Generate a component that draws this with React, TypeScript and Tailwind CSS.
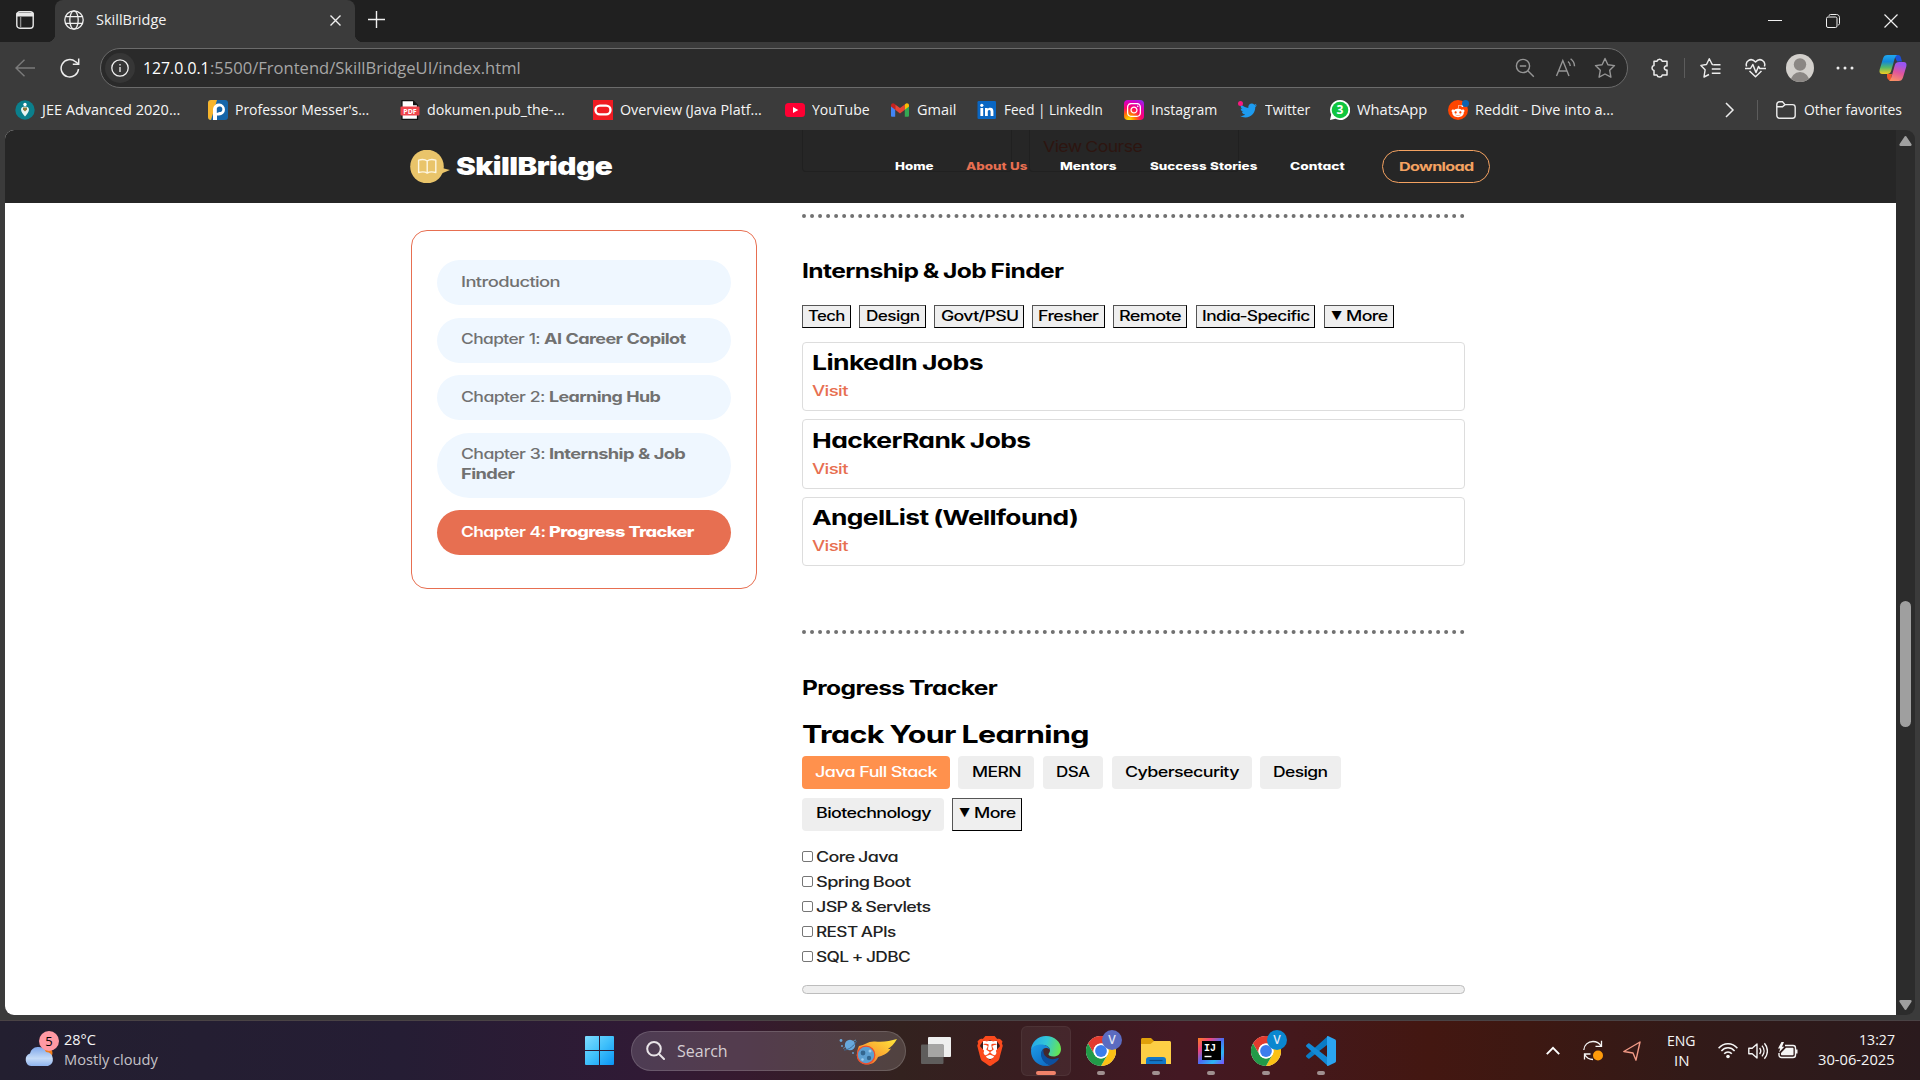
import React, { useLayoutEffect, useRef, useState } from 'react';
import { SiBrave } from 'react-icons/si';
import { FaTwitter, FaRedditAlien, FaInstagram } from 'react-icons/fa';

interface FitProps {
  w: number;
  className?: string;
  children: React.ReactNode;
}

// Single line of text stretched to a fixed width, keeps labels aligned with any fallback font
const Fit: React.FC<FitProps> = ({ w, className = '', children }) => {
  const ref = useRef<HTMLSpanElement>(null);
  const [scale, setScale] = useState(1);

  useLayoutEffect(() => {
    if (ref.current && ref.current.offsetWidth > 0) {
      setScale(w / ref.current.offsetWidth);
    }
  }, [w]);

  return (
    <span className={`block shrink-0 text-left ${className}`} style={{ width: w }}>
      <span ref={ref} className="inline-block origin-left whitespace-nowrap" style={{ transform: `scaleX(${scale})` }}>
        {children}
      </span>
    </span>
  );
};

const TabStrip = () => (
  <div className="flex h-[42px] shrink-0 bg-[#202020] text-[#f3f3f3]">
    <svg className="ml-4 mt-[11px] h-[18px] w-[18px] shrink-0" viewBox="0 0 18 18" fill="none" stroke="#e8e8e8" strokeWidth="1.4">
      <rect x="0.8" y="0.8" width="16.4" height="16.4" rx="3" />
      <path d="M1 2.5h16v2.2H1z" fill="#e8e8e8" />
      <path d="M4.6 5v12" stroke="#8a8a8a" />
    </svg>
    <div className="relative ml-[21px] flex h-[42px] w-[300px] rounded-t-lg bg-[#3b3b3b]">
      <span className="absolute -left-2 bottom-0 h-2 w-2 bg-[radial-gradient(circle_at_0_0,#202020_8px,#3b3b3b_8.5px)]" />
      <span className="absolute -right-2 bottom-0 h-2 w-2 bg-[radial-gradient(circle_at_100%_0,#202020_8px,#3b3b3b_8.5px)]" />
      <svg className="ml-[9px] mt-[10px] h-5 w-5" viewBox="0 0 20 20" fill="none" stroke="#f0f0f0" strokeWidth="1.3">
        <circle cx="10" cy="10" r="9.2" />
        <ellipse cx="10" cy="10" rx="4.2" ry="9.2" />
        <path d="M1.6 6.7h16.8M1.6 13.3h16.8" />
      </svg>
      <Fit w={70} className="ml-3 mt-[9px] text-[14.5px] leading-[21px]">SkillBridge</Fit>
      <svg className="ml-[164px] mt-[15px] h-[11px] w-[11px]" viewBox="0 0 11 11" stroke="#f0f0f0" strokeWidth="1.4">
        <path d="M0.5 0.5l10 10M10.5 0.5l-10 10" />
      </svg>
    </div>
    <svg className="ml-[13px] mt-[11px] h-[17px] w-[17px]" viewBox="0 0 17 17" stroke="#f0f0f0" strokeWidth="1.4">
      <path d="M8.5 0v17M0 8.5h17" />
    </svg>
    <div className="ml-auto mr-[22px] flex h-[42px] items-center">
      <svg className="h-[14px] w-[14px]" viewBox="0 0 14 14" stroke="#f0f0f0"><path d="M0 6.5h14" /></svg>
      <svg className="ml-[44px] h-[14px] w-[14px]" viewBox="0 0 14 14" fill="none" stroke="#f0f0f0">
        <rect x="0.5" y="3" width="10.5" height="10.5" rx="1.5" />
        <path d="M3 1.8C3 1 3.6.5 4.4.5h6c1.8 0 3.1 1.3 3.1 3.1v6c0 .8-.5 1.4-1.3 1.4" />
      </svg>
      <svg className="ml-[44px] h-[14px] w-[14px]" viewBox="0 0 14 14" stroke="#f0f0f0" strokeWidth="1.2">
        <path d="M0.5 0.5l13 13M13.5 0.5l-13 13" />
      </svg>
    </div>
  </div>
);

const AddressRow = () => (
  <div className="flex h-10 items-center">
    <svg className="ml-[15px] h-5 w-5" viewBox="0 0 20 20" fill="none" stroke="#7b7b7b" strokeWidth="1.4">
      <path d="M20 10H1M9.5 1.8L1 10l8.500 8.200" />
    </svg>
    <svg className="ml-[25px] h-[22px] w-5" viewBox="0 0 20 22" fill="none" stroke="#ececec" strokeWidth="1.5">
      <path d="M18.500 12a8.700 8.700 0 1 1-3-7.300L18.500 7" />
      <path d="M18.700 1.500V7.300H12.800" />
    </svg>
    <div className="ml-5 flex h-10 w-[1528px] items-center rounded-full border border-[#6b6b6b] bg-[#2a2a2a] pr-[11px]">
      <span className="ml-1 flex h-[30px] w-[30px] items-center justify-center rounded-full bg-[#363636]">
        <svg className="h-[18px] w-[18px]" viewBox="0 0 18 18" fill="none" stroke="#f0f0f0" strokeWidth="1.3">
          <circle cx="9" cy="9" r="8.200" />
          <path d="M9 8v5M9 5v1.500" />
        </svg>
      </span>
      <Fit w={67} className="ml-2 pb-px text-[16.500px] leading-6 text-white">127.0.0.1</Fit>
      <Fit w={311} className="pb-px text-[16.500px] leading-6 text-[#a6a6a6]">:5500/Frontend/SkillBridgeUI/index.html</Fit>
      <svg className="ml-auto h-5 w-5" viewBox="0 0 20 20" fill="none" stroke="#969696" strokeWidth="1.400">
        <circle cx="8" cy="8" r="6.600" />
        <path d="M4.800 8h6.400M12.800 12.800l6 6" />
      </svg>
      <svg className="ml-5 h-[22px] w-[22px]" viewBox="0 0 22 22" fill="none" stroke="#969696" strokeWidth="1.400">
        <path d="M1.500 19L7.800 3.500 14 19M3.600 14h8.400" />
        <path d="M13 4.500c1.500 1.200 2.300 2.600 2.300 4.500M15.600 1.800c2.500 1.900 3.900 4.200 3.900 7.500" />
      </svg>
      <svg className="ml-[17px] h-[22px] w-[22px]" viewBox="0 0 22 22" fill="none" stroke="#969696" strokeWidth="1.400" strokeLinejoin="round">
        <path d="M11 1.500l2.900 6.200 6.600.9-4.800 4.700 1.200 6.900L11 17l-5.900 3.200 1.200-6.900L1.500 8.600l6.600-.9z" />
      </svg>
    </div>
    <svg className="ml-[22px] h-5 w-5" viewBox="0 0 20 20" fill="none" stroke="#ececec" strokeWidth="1.500" strokeLinejoin="round">
      <path d="M4 3.300h2.900a2.800 2.800 0 0 1 5.400 0h4.700v4.600c-1.500-.2-2.700.6-2.700 2s1.200 2.300 2.700 2.100v5h-4.700a2.800 2.800 0 0 1-5.400 0H4v-4.500a2.500 2.500 0 0 1 0-4.900z" />
    </svg>
    <span className="ml-[14px] h-5 w-px bg-[#5c5c5c]" />
    <svg className="ml-[15px] h-[22px] w-[21px]" viewBox="0 0 21 22" fill="none" stroke="#ececec" strokeWidth="1.400" strokeLinejoin="round">
      <path d="M13 7.500h-.8L9.300 1.700 6.500 7.500.9 8.400l4.200 4.400L4 20l5-2.500" />
      <path d="M13.200 7.800H20.500M11.800 12H20.500M11.800 16.200H20.500" />
    </svg>
    <svg className="ml-6 h-5 w-[21px]" viewBox="0 0 21 20" fill="none" stroke="#ececec" strokeWidth="1.500" strokeLinejoin="round">
      <path d="M1.600 8.500C-.2 3 6-1 10.500 4 15-1 21.200 3 19.400 8.500M4.500 13l6 5.800 6-5.800" />
      <path d="M0 10.500h5.500l2.300-4 3.200 8 2.500-6 1.300 2H21" />
    </svg>
    <svg className="ml-5 h-7 w-7" viewBox="0 0 28 28">
      <clipPath id="avatar"><circle cx="14" cy="14" r="14" /></clipPath>
      <g clipPath="url(#avatar)">
        <path d="M0 0h28v28H0z" fill="#d3d0cc" />
        <circle cx="14" cy="10.500" r="6.200" fill="#8b8784" />
        <path d="M4.500 28a9.500 10 0 0 1 19 0z" fill="#8b8784" />
      </g>
    </svg>
    <svg className="ml-[22px] h-1 w-[18px]" viewBox="0 0 18 4" fill="#ececec">
      <circle cx="2" cy="2" r="1.500" /><circle cx="9" cy="2" r="1.500" /><circle cx="16" cy="2" r="1.500" />
    </svg>
    <svg className="ml-[25px] h-7 w-7" viewBox="0 0 28 28">
      <defs>
        <linearGradient id="cpA" x1="0" y1="0" x2="0" y2="1">
          <stop offset="0" stopColor="#1fa8f0" /><stop offset="0.350" stopColor="#1488d8" /><stop offset="0.650" stopColor="#53b86a" /><stop offset="1" stopColor="#f3cd20" />
        </linearGradient>
        <linearGradient id="cpB" x1="0.300" y1="0" x2="0" y2="1">
          <stop offset="0" stopColor="#9a55f0" /><stop offset="0.450" stopColor="#e0559c" /><stop offset="1" stopColor="#ff9a5c" />
        </linearGradient>
      </defs>
      <path d="M15 1h4c2 0 2.600 1.400 3 3l1 3.500h-5z" fill="#1c50d8" />
      <path d="M8 20h5l-1 6.500c-2.600 0-3.600-1.500-4-3.500z" fill="#f0572c" />
      <path d="M8.500 1H18c-2 1.500-2.500 4-3.300 7l-2.400 8.500c-.8 2.700-2 3.500-4.500 3.500H3.500C.8 20 0 18 .7 15.500L4 4.500C4.800 2 6 1 8.500 1z" fill="url(#cpA)" />
      <path d="M19.500 27H10c2-1.500 2.500-4 3.300-7l2.400-8.500c.8-2.700 2-3.500 4.500-3.500h4.300c2.700 0 3.500 2 2.800 4.500L24 23.500c-.8 2.500-2 3.500-4.500 3.500z" fill="url(#cpB)" />
    </svg>
  </div>
);

const JeeIcon = () => (
  <svg className="h-5 w-5" viewBox="0 0 20 20">
    <circle cx="10" cy="10" r="9.700" fill="#0b7f8c" />
    <circle cx="10" cy="4.500" r="1.700" fill="#fff" />
    <path d="M6 9.500c0-2 1.500-3 4-3s4 1 4 3c0 2.500-2 4.500-4 7-2-2.500-4-4.500-4-7z" fill="#e8f4f2" />
    <path d="M8 9.500l2 2 2-2v-2H8z" fill="#8d7a3a" />
  </svg>
);

const MesserIcon = () => (
  <svg className="h-5 w-5" viewBox="0 0 20 20">
    <rect width="20" height="20" rx="3" fill="#1565a9" />
    <path d="M0 3a3 3 0 0 1 3-3h6L3 20a3 3 0 0 1-3-3z" fill="#f7b52c" />
    <path d="M5 20V9a6 6 0 1 1 6 6.500H9V20z" fill="#fff" />
    <path d="M8.800 13V8.600a2.800 2.800 0 1 1 2.700 3.400z" fill="#1565a9" />
  </svg>
);

const PdfIcon = () => (
  <svg className="h-5 w-5" viewBox="0 0 20 20">
    <path d="M2 .7h11l4.500 4.500v14.100H2z" fill="#fff" stroke="#111" strokeWidth="1.200" />
    <path d="M13 .7v4.500h4.500z" fill="#111" />
    <rect x="0.500" y="6.500" width="19" height="9" rx="1" fill="#f0454c" />
    <text x="10" y="13.600" textAnchor="middle" fontSize="7" fontWeight="700" fill="#fff">PDF</text>
  </svg>
);

const OracleIcon = () => (
  <svg className="h-5 w-5" viewBox="0 0 20 20">
    <rect width="20" height="20" fill="#f01b22" />
    <rect x="2.500" y="5.600" width="15" height="8.800" rx="4.400" fill="none" stroke="#fff" strokeWidth="2.400" />
  </svg>
);

const YoutubeIcon = () => (
  <svg className="h-5 w-5" viewBox="0 0 20 20">
    <rect y="3" width="20" height="14" rx="3.500" fill="#ff0033" />
    <path d="M8 7v6l5.300-3z" fill="#fff" />
  </svg>
);

const GmailIcon = () => (
  <svg className="h-5 w-5" viewBox="0 0 20 20">
    <path d="M1 5.500V15.500c0 .8.500 1.300 1.300 1.300H5.200V8.500z" fill="#4285f4" />
    <path d="M19 5.500V15.500c0 .8-.5 1.300-1.300 1.300H14.800V8.500z" fill="#34a853" />
    <path d="M5.200 4.500L10 8.100l4.800-3.600v5.300L10 13.400 5.200 9.800z" fill="#ea4335" />
    <path d="M1 6.500V5.400C1 3.400 3.200 2.600 4.700 3.900l.5.500v5.400z" fill="#c5221f" />
    <path d="M19 6.500V5.400c0-2-2.200-2.800-3.700-1.500l-.5.500v5.400z" fill="#fbbc04" />
  </svg>
);

const LinkedinIcon = () => (
  <svg className="h-5 w-5" viewBox="0 0 20 20" fill="#fff">
    <rect x="0.500" y="1" width="18.500" height="18" rx="1.200" fill="#0a66c2" />
    <circle cx="4.800" cy="5.300" r="1.600" />
    <path d="M3.400 7.900h2.800V16H3.400zM8 7.900h2.700V9c.5-.8 1.400-1.300 2.600-1.300 2.500 0 3.100 1.600 3.100 3.900V16h-2.800v-4c0-1-.1-2.100-1.300-2.100S10.800 10.800 10.800 12v4H8z" />
  </svg>
);

const InstagramIcon = () => (
  <span className="flex h-5 w-5 items-center justify-center rounded-[4px] bg-[radial-gradient(circle_at_25%_100%,#ffd600_5%,#ff7a00_25%,#ff0169_50%,#d300c5_75%,#7638fa_100%)]">
    <FaInstagram className="h-4 w-4 text-white" />
  </span>
);

const TwitterIcon = () => (
  <span className="relative flex h-5 w-5 items-center justify-center">
    <FaTwitter className="h-[17px] w-[17px] text-[#1d9bf0]" />
    <span className="absolute left-0 top-[1px] h-[5px] w-[5px] rounded-full bg-[#f91880]" />
  </span>
);

const WhatsappIcon = () => (
  <svg className="h-5 w-5" viewBox="0 0 20 20">
    <path d="M10 0a10 10 0 1 1-4.600 18.800L0 20l1.200-5.300A10 10 0 0 1 10 0z" fill="#fff" />
    <circle cx="10" cy="10" r="8.300" fill="#10c53f" />
    <text x="10" y="14.400" textAnchor="middle" fontSize="12" fontWeight="700" fill="#fff">3</text>
  </svg>
);

const RedditIcon = () => (
  <span className="relative flex h-5 w-5 items-center justify-center rounded-full bg-[#ff4500]">
    <FaRedditAlien className="mt-[1px] h-[14px] w-[14px] text-white" />
    <span className="absolute -right-px top-0 h-[7px] w-[7px] rounded-full bg-[#0b62b0]" />
  </span>
);

const bookmarks = [
  { label: 'JEE Advanced 2020...', w: 138, gap: 'ml-[15px]', icon: <JeeIcon /> },
  { label: "Professor Messer's...", w: 134, gap: 'ml-7', icon: <MesserIcon /> },
  { label: 'dokumen.pub_the-...', w: 138, gap: 'ml-[31px]', icon: <PdfIcon /> },
  { label: 'Overview (Java Platf...', w: 142, gap: 'ml-7', icon: <OracleIcon /> },
  { label: 'YouTube', w: 58, gap: 'ml-[23px]', icon: <YoutubeIcon /> },
  { label: 'Gmail', w: 39, gap: 'ml-5', icon: <GmailIcon /> },
  { label: 'Feed | LinkedIn', w: 99, gap: 'ml-[21px]', icon: <LinkedinIcon /> },
  { label: 'Instagram', w: 66, gap: 'ml-[21px]', icon: <InstagramIcon /> },
  { label: 'Twitter', w: 45, gap: 'ml-[21px]', icon: <TwitterIcon /> },
  { label: 'WhatsApp', w: 70, gap: 'ml-5', icon: <WhatsappIcon /> },
  { label: 'Reddit - Dive into a...', w: 139, gap: 'ml-[21px]', icon: <RedditIcon /> },
];

const BookmarksRow = () => (
  <div className="mt-[2px] flex h-10 items-center text-[14.500px] leading-5 text-[#f5f5f5]">
    {bookmarks.map((b) => (
      <div key={b.label} className={`flex items-center gap-[7px] ${b.gap}`}>
        {b.icon}
        <Fit w={b.w} className="pb-px">{b.label}</Fit>
      </div>
    ))}
    <svg className="ml-[111px] h-4 w-[10px]" viewBox="0 0 10 16" fill="none" stroke="#ececec" strokeWidth="1.500">
      <path d="M1 1l7 7-7 7" />
    </svg>
    <span className="ml-[22px] h-5 w-px bg-[#5c5c5c]" />
    <svg className="ml-[18px] h-[18px] w-5" viewBox="0 0 20 18" fill="none" stroke="#ececec" strokeWidth="1.400">
      <path d="M.8 3.500C.8 2 2 .8 3.500.8h3L9 3.600h7.500c1.500 0 2.700 1.200 2.700 2.700v8.200c0 1.500-1.200 2.700-2.700 2.700h-13C2 17.200.8 16 .8 14.500z" />
      <path d="M.8 5.800h5.700L9 3.600" />
    </svg>
    <Fit w={98} className="ml-2 pb-px">Other favorites</Fit>
  </div>
);

const SiteHeader = () => (
  <div className="relative flex h-[73px] shrink-0 items-center bg-[#262626] text-white">
    <div className="absolute left-[797px] top-0 h-[42px] w-[210px] rounded-b border border-t-0 border-[#202020]" />
    <div className="absolute left-[1024px] top-0 h-[42px] w-[210px] rounded-b border border-t-0 border-[#202020]" />
    <Fit w={99} className="absolute left-[1038px] top-[5px] text-[15px] leading-6 text-[#2d1510]">View Course</Fit>
    <svg className="ml-[405px] h-[33px] w-10 shrink-0" viewBox="0 0 40 33">
      <path d="M30 17.500l10 2.500-11 4.500z" fill="#e9c46a" />
      <circle cx="17" cy="16.500" r="16.800" fill="#e9c46a" />
      <path d="M17.200 11c-2-1.600-5.500-1.700-8.600-.9v12.400c3.100-.9 6.600-.7 8.600.6 2-1.300 5.500-1.500 8.600-.6V10.100c-3.100-.8-6.600-.7-8.600.9zM17.200 11v12" fill="none" stroke="#fdf6e0" strokeWidth="1.400" strokeLinejoin="round" />
    </svg>
    <Fit w={156} className="ml-[6px] pb-[2px] text-[25px] font-black leading-[30px]">SkillBridge</Fit>
    <div className="ml-[283px] flex items-center text-[10.500px] font-extrabold leading-4 tracking-normal [word-spacing:0.04em]">
      <Fit w={38}>Home</Fit>
      <Fit w={61} className="ml-[33px] text-[#e76f51]">About Us</Fit>
      <Fit w={57} className="ml-[33px]">Mentors</Fit>
      <Fit w={107} className="ml-[33px]">Success Stories</Fit>
      <Fit w={55} className="ml-[33px]">Contact</Fit>
    </div>
    <button className="ml-[37px] flex h-[33px] w-[108px] items-center justify-center rounded-full border border-[#f4a261] text-xs font-bold leading-4 text-[#f4a261]">
      <Fit w={74}>Download</Fit>
    </button>
  </div>
);

const chapters = [
  { label: 'Chapter 1:', lw: 79, title: 'AI Career Copilot', tw: 142, gap: 'gap-1' },
  { label: 'Chapter 2:', lw: 84, title: 'Learning Hub', tw: 111, gap: 'gap-1' },
];

const Sidebar = () => (
  <div className="ml-[406px] mt-[27px] flex h-[359px] w-[346px] shrink-0 flex-col gap-[12.500px] rounded-2xl border border-[#e76f51] px-[25px] pt-[29px] text-[14.500px] font-[450] leading-5 text-[#717171] [word-spacing:0.02em]">
    <div className="h-[45px] rounded-full bg-[#eff7ff] px-6 pt-[12px]">
      <Fit w={99}>Introduction</Fit>
    </div>
    {chapters.map((c) => (
      <div key={c.label} className={`flex h-[45px] rounded-full bg-[#eff7ff] px-6 pt-[11.500px] ${c.gap}`}>
        <Fit w={c.lw}>{c.label}</Fit>
        <Fit w={c.tw} className="font-bold">{c.title}</Fit>
      </div>
    ))}
    <div className="h-[65px] rounded-full bg-[#eff7ff] px-6 pt-[11.500px]">
      <div className="flex gap-1">
        <Fit w={84}>Chapter 3:</Fit>
        <Fit w={136} className="font-bold">Internship &amp; Job</Fit>
      </div>
      <Fit w={53} className="font-bold">Finder</Fit>
    </div>
    <div className="flex h-[45px] gap-1 rounded-full bg-[#e76f51] px-6 pt-[11.500px] text-white">
      <Fit w={84} className="font-semibold">Chapter 4:</Fit>
      <Fit w={145} className="font-extrabold">Progress Tracker</Fit>
    </div>
  </div>
);

const MoreLabel = () => (
  <span className="flex gap-1">
    <Fit w={11} className="text-[12px]">▼</Fit>
    <Fit w={42}>More</Fit>
  </span>
);

// box widths and label widths
const filters = [
  { label: 'Tech', box: 'w-[49px]', w: 37 },
  { label: 'Design', box: 'ml-2 w-[67px]', w: 54 },
  { label: 'Govt/PSU', box: 'ml-2 w-[90px]', w: 77 },
  { label: 'Fresher', box: 'ml-2 w-[73px]', w: 61 },
  { label: 'Remote', box: 'ml-2 w-[74px]', w: 62 },
  { label: 'India-Specific', box: 'ml-[9px] w-[119px]', w: 108 },
];

const jobs = [
  { title: 'LinkedIn Jobs', w: 171 },
  { title: 'HackerRank Jobs', w: 218 },
  { title: 'AngelList (Wellfound)', w: 266 },
];

const tracks = [
  { label: 'MERN', box: 'ml-2 w-[76px]', w: 49 },
  { label: 'DSA', box: 'ml-[9px] w-[60px]', w: 34 },
  { label: 'Cybersecurity', box: 'ml-[9px] w-[140px]', w: 114 },
  { label: 'Design', box: 'ml-2 w-[81px]', w: 55 },
];

const topics = [
  { label: 'Core Java', w: 82 },
  { label: 'Spring Boot', w: 95 },
  { label: 'JSP & Servlets', w: 115 },
  { label: 'REST APIs', w: 80 },
  { label: 'SQL + JDBC', w: 94 },
];

const MainContent = () => (
  <div className="ml-[45px] mt-[11px] flex w-[662.500px] shrink-0 flex-col text-black">
    <div className="border-t-4 border-dotted border-[#717171]" />
    <Fit w={261} className="mt-10 pt-px text-[19.500px] font-bold leading-6">Internship &amp; Job Finder</Fit>
    <div className="mt-[22px] flex text-[14px] font-[450] leading-5">
      {filters.map((f) => (
        <button key={f.label} className={`flex h-[23px] items-center justify-center border border-b-black border-l-[#555] border-r-black border-t-[#555] bg-[#efefef] pb-px ${f.box}`}>
          <Fit w={f.w}>{f.label}</Fit>
        </button>
      ))}
      <button className="ml-[9px] flex h-[23px] w-[70px] items-center justify-center border border-b-black border-l-[#555] border-r-black border-t-[#555] bg-[#efefef] pb-px">
        <MoreLabel />
      </button>
    </div>
    <div className="mt-[14px] flex flex-col gap-2">
      {jobs.map((j) => (
        <div key={j.title} className="h-[69.400px] rounded border border-[#ddd] pl-[8.500px] pt-[7.300px]">
          <Fit w={j.w} className="text-[20.500px] font-bold leading-[26px]">{j.title}</Fit>
          <Fit w={36} className="mt-[5px] text-[14px] font-[450] leading-5 text-[#e76f51]">Visit</Fit>
        </div>
      ))}
    </div>
    <div className="mt-[63.800px] border-t-4 border-dotted border-[#717171]" />
    <Fit w={195} className="mt-[42px] text-[19.500px] font-bold leading-6">Progress Tracker</Fit>
    <Fit w={287} className="mt-5 text-[24px] font-bold leading-[30px]">Track Your Learning</Fit>
    <div className="mt-[6px] flex text-[14px] font-[450] leading-5">
      <button className="flex h-[33px] w-[148px] items-center justify-center rounded bg-[#ff914d] pb-px font-medium text-white">
        <Fit w={122}>Java Full Stack</Fit>
      </button>
      {tracks.map((t) => (
        <button key={t.label} className={`flex h-[33px] items-center justify-center rounded bg-[#eee] pb-px ${t.box}`}>
          <Fit w={t.w}>{t.label}</Fit>
        </button>
      ))}
    </div>
    <div className="mt-[9px] flex gap-2 text-[14px] font-[450] leading-5">
      <button className="flex h-[33px] w-[142px] items-center justify-center rounded bg-[#eee] pb-[3px]">
        <Fit w={115}>Biotechnology</Fit>
      </button>
      <button className="flex h-[33px] w-[70px] items-center justify-center border border-b-black border-l-[#555] border-r-black border-t-[#555] bg-[#efefef] pb-[3px]">
        <MoreLabel />
      </button>
    </div>
    <div className="mt-[13px] text-[14px] font-[450] leading-5 text-[#222]">
      {topics.map((t) => (
        <label key={t.label} className="flex h-[25px] items-center">
          <span className="h-[11px] w-[11px] rounded-[2px] border border-[#767676] bg-white" />
          <Fit w={t.w} className="ml-[3px] pt-px">{t.label}</Fit>
        </label>
      ))}
    </div>
    <div className="mt-4 h-[9px] rounded-[5px] border border-[#bdbdbd] bg-[#eee]" />
  </div>
);

const ScrollBar = () => (
  <div className="flex w-[19px] shrink-0 flex-col items-center bg-[#2c2c2c]">
    <svg className="mt-[6px] h-[10px] w-[13px]" viewBox="0 0 13 10" fill="#a0a0a0"><path d="M6.500 0c.6 0 .9.400 1.200.9l4.700 7.200c.6 1 .1 1.900-1 1.900H1.600c-1.100 0-1.600-.9-1-1.900L5.300.9C5.600.4 5.900 0 6.500 0z" /></svg>
    <div className="mt-[455px] h-[126px] w-[11px] rounded-full bg-[#9f9f9f]" />
    <svg className="mb-[5px] mt-auto h-[10px] w-[13px] rotate-180" viewBox="0 0 13 10" fill="#a0a0a0"><path d="M6.500 0c.6 0 .9.400 1.200.9l4.700 7.200c.6 1 .1 1.900-1 1.900H1.600c-1.100 0-1.600-.9-1-1.900L5.300.9C5.600.4 5.900 0 6.500 0z" /></svg>
  </div>
);

const ChromeIcon = ({ badge }: { badge: string }) => (
  <span className="relative h-[30px] w-[30px]">
    <svg className="h-[30px] w-[30px]" viewBox="0 0 30 30">
      <circle cx="15" cy="15" r="15" fill="#fff" />
      <path d="M2 7.500A15 15 0 0 1 28 7.500H15A7.500 7.500 0 0 0 8.500 18.750z" fill="#e33b2e" />
      <path d="M28 7.500A15 15 0 0 1 15 30L21.500 18.750A7.500 7.500 0 0 0 15 7.500z" fill="#fbc116" />
      <path d="M15 30A15 15 0 0 1 2 7.500L8.500 18.750A7.500 7.500 0 0 0 21.500 18.750z" fill="#229a48" />
      <circle cx="15" cy="15" r="7.500" fill="#fff" />
      <circle cx="15" cy="15" r="5.900" fill="#3b7ded" />
    </svg>
    <span className={`absolute -right-[6px] -top-[6px] flex h-5 w-5 items-center justify-center rounded-full text-xs font-semibold text-[#dfe4f5] ${badge}`}>V</span>
  </span>
);

const Indicator = () => <span className="absolute bottom-[6px] h-1 w-2 rounded-full bg-[#a09090]" />;

const Taskbar = () => (
  <div className="flex h-[60px] shrink-0 items-center border-t border-[#4a4345] bg-[linear-gradient(90deg,#231f30_0,#251d34_400px,#301a35_640px,#361a2f_740px,#33221f_900px,#381d20_1020px,#431823_1180px,#44181c_1290px,#431711_1430px,#3d1812_1530px,#321a18_1690px,#2a1a1d_1920px)] text-[#f5f5f5]">
    <div className="relative -top-px ml-[25px] h-[38px] w-[34px]">
      <svg className="absolute left-0 top-0 h-9 w-9" viewBox="0 0 36 36">
        <defs>
          <linearGradient id="cloud" x1="0" y1="0" x2="0" y2="1">
            <stop offset="0" stopColor="#7fa7ea" /><stop offset="0.600" stopColor="#c5dbf7" /><stop offset="1" stopColor="#8fb4ef" />
          </linearGradient>
        </defs>
        <circle cx="22" cy="22" r="5.500" fill="#f07c1b" />
        <path d="M6 35a6.500 6.500 0 0 1-1-12.500A8.500 8.500 0 0 1 21 21a7.200 7.200 0 0 1 2 14z" fill="url(#cloud)" />
      </svg>
      <span className="absolute left-[14px] top-0 flex h-5 w-5 items-center justify-center rounded-full bg-[#ff99a4] text-[13px] leading-5 text-black">5</span>
    </div>
    <div className="ml-[5px] pb-[2px] text-[14.500px] leading-5">
      <Fit w={32}>28°C</Fit>
      <Fit w={94} className="text-[#c5c2c8]">Mostly cloudy</Fit>
    </div>
    <svg className="ml-[427px] h-[29px] w-[29px]" viewBox="0 0 29 29">
      <defs>
        <linearGradient id="win" x1="0" y1="0" x2="1" y2="1">
          <stop offset="0" stopColor="#7fdcff" /><stop offset="0.500" stopColor="#3fc0fb" /><stop offset="1" stopColor="#0a94f5" />
        </linearGradient>
      </defs>
      <path d="M0 1a1 1 0 0 1 1-1h13v14H0zM15 0h13a1 1 0 0 1 1 1v13H15zM0 15h14v14H1a1 1 0 0 1-1-1zM15 15h14v13a1 1 0 0 1-1 1H15z" fill="url(#win)" />
    </svg>
    <div className="ml-[17px] flex h-10 w-[275px] items-center rounded-full border border-white/15 bg-white/15 shadow-none">
      <svg className="ml-[14px] h-[19px] w-[19px]" viewBox="0 0 19 19" fill="none" stroke="#e9e4e8" strokeWidth="2" strokeLinecap="round">
        <circle cx="8" cy="7.800" r="6.800" /><path d="M13 13l5 5" />
      </svg>
      <Fit w={51} className="ml-3 text-base leading-6 text-[#d5ced3]">Search</Fit>
      <svg className="ml-[111px] h-[28px] w-[58px]" viewBox="0 0 58 28">
        <defs>
          <linearGradient id="fire" x1="0" y1="1" x2="1" y2="0">
            <stop offset="0" stopColor="#f0582b" /><stop offset="0.450" stopColor="#fba632" /><stop offset="1" stopColor="#ffe83a" />
          </linearGradient>
        </defs>
        <path d="M5 12C3 10.500 14 4 17 3" stroke="#5f8fb5" fill="none" />
        <circle cx="11" cy="8" r="5.200" fill="#68a8dc" />
        <path d="M5 13c5 0 10-4 12.500-9" stroke="#3f6c95" fill="none" />
        <circle cx="2" cy="3.500" r="1.400" fill="#6aa5d6" /><circle cx="3" cy="9" r="0.900" fill="#6aa5d6" /><circle cx="14" cy="16" r="0.900" fill="#6aa5d6" />
        <path d="M20 9c6-1 9-5 16-4.500C44 5.500 51 4 58 2c-3 5-6 8-9 10 1 0 2 0 3-.500-4 6-9 7-13 8.500-2 5-6 7.500-11 7.500-7 0-11-6-10-11 .300-3 1-5 2-7.500z" fill="url(#fire)" />
        <circle cx="27" cy="18" r="8.800" fill="#5d9fd0" stroke="#ee4f2e" strokeWidth="1.200" />
        <circle cx="24" cy="16" r="2.400" fill="#33668f" /><circle cx="30" cy="21" r="2.200" fill="#33668f" /><circle cx="31" cy="14" r="1.500" fill="#9ccdef" /><circle cx="23.500" cy="22.500" r="1.300" fill="#9ccdef" />
      </svg>
    </div>
    <svg className="ml-[15px] h-[27px] w-[30px]" viewBox="0 0 30 27">
      <rect x="7" width="23" height="20" rx="1" fill="#efefef" />
      <rect y="7.500" width="22.500" height="19.500" rx="1" fill="#5f5d5c" />
      <path d="M7 7.500h15.500V20H7z" fill="#a6a5a4" />
    </svg>
    <span className="relative ml-[25px] mr-px flex h-[31px] w-[28px] items-center justify-center">
      <span className="absolute left-[7px] top-[6px] h-[18px] w-[14px] rounded-b-lg bg-white" />
      <SiBrave className="relative h-[30px] w-[30px] shrink-0 text-[#fb4a1d]" />
    </span>
    <span className="relative ml-[16px] flex h-[50px] w-[50px] items-center justify-center rounded-md border border-white/5 bg-white/5">
      <svg className="h-[30px] w-[30px]" viewBox="0 0 30 30">
        <defs>
          <linearGradient id="edgeTop" x1="0" y1="0.300" x2="1" y2="0.500">
            <stop offset="0" stopColor="#25a6e8" /><stop offset="0.500" stopColor="#33c7d8" /><stop offset="1" stopColor="#66e650" />
          </linearGradient>
          <linearGradient id="edgeLow" x1="0" y1="0" x2="0.700" y2="1">
            <stop offset="0" stopColor="#1d9de8" /><stop offset="1" stopColor="#0f6dc4" />
          </linearGradient>
        </defs>
        <path d="M0 14C.5 6 7 0 15 0c8.500 0 15 6 15 13 0 5-3.500 7.500-7.500 7.500-3.500 0-5-1-5-2.200 0-1 1.500-1.600 1.500-4C19 11 15.500 9 11.500 9 6 9 1.500 11 0 14z" fill="url(#edgeTop)" />
        <path d="M0 15c0-4 5-6.500 10-6.500 5 0 8.500 2.500 9 5.500-1-1.500-2.500-2-4-2-4 0-5.500 5-4 9.500C12.500 26 17 29 20 29c-1.500.7-3.300 1-5 1C6 30 0 23 0 15z" fill="url(#edgeLow)" />
        <path d="M12.500 13c-2.800 2.200-3 6-1.500 9.500 1.700 4 5.500 6.500 9 6.500 3-1 6-3.500 7.700-6.300.4-.7-.2-1-.8-.7C21 25 11 22 12.500 13z" fill="#0c4f9e" />
      </svg>
      <span className="absolute bottom-0 h-1 w-5 rounded-full bg-[#f0826a]" />
    </span>
    <span className="relative ml-[15px] flex h-[60px] w-[30px] items-center justify-center">
      <ChromeIcon badge="bg-[#5b6bc0]" />
      <Indicator />
    </span>
    <span className="relative ml-[25px] flex h-[60px] w-[30px] items-center justify-center">
      <svg className="h-[26px] w-[30px]" viewBox="0 0 30 26">
        <path d="M0 1.500C0 .7.700 0 1.500 0H10l3.500 3.500L10 8H0z" fill="#e0a10b" />
        <path d="M0 6h9.500l3.500-3h15.500c.8 0 1.500.700 1.500 1.500V26H0z" fill="#fdcf45" />
        <path d="M5 26v-4c0-2 1-3 3-3h14c2 0 3 1 3 3v4z" fill="#1277c8" />
        <path d="M8.500 22.500h13" stroke="#0b4a85" strokeWidth="1.200" />
      </svg>
      <Indicator />
    </span>
    <span className="relative ml-[25px] flex h-[60px] w-[30px] items-center justify-center">
      <span className="flex h-[26px] w-[26px] items-center justify-center bg-[linear-gradient(135deg,#fc801d_0,#f0457c_25%,#4a6cf5_50%,#2bb7f3_75%,#7c4dff_100%)]">
        <svg className="h-[19px] w-[19px]" viewBox="0 0 19 19">
          <path d="M0 0h19v19H0z" />
          <text x="2" y="9.500" fontSize="10" fontWeight="700" fill="#fff" className="[font-family:'Liberation_Mono',monospace]">IJ</text>
          <path d="M2.500 15.500h7" stroke="#fff" strokeWidth="1.400" />
        </svg>
      </span>
      <Indicator />
    </span>
    <span className="relative ml-[25px] flex h-[60px] w-[30px] items-center justify-center">
      <ChromeIcon badge="bg-[#0a87d0]" />
      <Indicator />
    </span>
    <span className="relative ml-[25px] flex h-[60px] w-[30px] items-center justify-center">
      <svg className="h-[30px] w-[30px]" viewBox="0 0 30 30">
        <path d="M22 0l-1 9L3.500 22.500c-.5.400-1 .3-1.400 0L.4 21c-.5-.5-.5-1.200 0-1.700z" fill="#0a7bc4" />
        <path d="M22 30l-1-9L3.500 7.500c-.5-.4-1-.3-1.400 0L.4 9c-.5.5-.5 1.200 0 1.700z" fill="#1389d6" />
        <path d="M22 0l6.800 3.200c.7.400 1.200 1 1.200 1.800v20c0 .8-.5 1.400-1.200 1.800L22 30c-.7 0-1-.4-1-1V1c0-.6.3-1 1-1z" fill="#2ba4f0" />
      </svg>
      <Indicator />
    </span>
    <svg className="ml-[210px] h-[9px] w-[14px]" viewBox="0 0 14 9" fill="none" stroke="#fff" strokeWidth="1.900"><path d="M.8 8.200L7 1.800l6.200 6.400" /></svg>
    <svg className="ml-[23px] h-[21px] w-[21px]" viewBox="0 0 21 21" fill="none" stroke="#f5f5f5" strokeWidth="1.300">
      <path d="M.8 10C1 5 5 1.500 10 1.500c4 0 6.500 1.800 8 4.500M18.500.8v5.500h-6M1.500 19.500v-5.500h6M1.800 14.500C3.500 18 6.500 19.500 10 19.500" />
      <circle cx="15" cy="15.500" r="5" fill="#ff9b0b" stroke="none" />
    </svg>
    <svg className="ml-[19px] h-[20px] w-[18px]" viewBox="0 0 18 20" fill="none" stroke="#f29a86" strokeWidth="1.400" strokeLinejoin="round">
      <path d="M17 1L.8 10.500l9.200 1.500 3 7.200z" />
    </svg>
    <div className="ml-[26px] flex flex-col items-center pb-[2px] text-[15px] leading-5">
      <Fit w={29}>ENG</Fit>
      <Fit w={15}>IN</Fit>
    </div>
    <svg className="ml-[22px] h-[17px] w-5" viewBox="0 0 20 17" fill="none" stroke="#f5f5f5" strokeWidth="1.500">
      <path d="M.6 6.200c5-6 13.800-6 18.800 0M3.400 9c3.600-4.200 9.600-4.200 13.200 0M6.200 11.800c2-2.500 5.600-2.500 7.600 0" />
      <circle cx="10" cy="14.500" r="1.800" fill="#f5f5f5" stroke="none" />
    </svg>
    <svg className="ml-[10px] h-[18px] w-5" viewBox="0 0 20 18" fill="none" stroke="#f5f5f5" strokeWidth="1.400" strokeLinejoin="round">
      <path d="M.8 6.200h3.400L9 2v14l-4.800-4.200H.8zM11.600 6c1.400 1.800 1.400 4.200 0 6M14 3.600c2.700 3.200 2.700 7.600 0 10.800M16.400 1.200c4 4.600 4 11 0 15.600" />
    </svg>
    <svg className="ml-[10px] h-[18px] w-5" viewBox="0 0 20 18" fill="none" stroke="#f5f5f5" strokeWidth="1.400">
      <path d="M7 3.500h8c1.500 0 2.500 1 2.500 2.500v7c0 1.500-1 2.500-2.500 2.500H3.500C2 15.500 1 14.500 1 13v-2" />
      <path d="M8 5.800h6.500c.6 0 1 .4 1 1v5.400c0 .6-.4 1-1 1H4c-.5 0-1-.4-1-1V11z" fill="#f5f5f5" stroke="none" />
      <path d="M18 7.500h1.500v4H18z" fill="#f5f5f5" stroke="none" />
      <path d="M3.500 0L0 6.500h2.200L1 10.500l5.300-5.800H4L6 0z" fill="#f5f5f5" stroke="none" />
    </svg>
    <div className="ml-[20px] flex flex-col items-end pb-[2px] text-[14.500px] leading-5">
      <Fit w={36}>13:27</Fit>
      <Fit w={77}>30-06-2025</Fit>
    </div>
  </div>
);

export default function App() {
  return (
    <div className="flex h-[1080px] w-[1920px] flex-col overflow-hidden bg-[#3b3b3b] [font-family:'Open_Sans','Noto_Sans',sans-serif]">
      <TabStrip />
      <div className="h-[88px] shrink-0 bg-[#3b3b3b] pt-[6px]">
        <AddressRow />
        <BookmarksRow />
      </div>
      <div className="mb-[5px] ml-[5px] flex h-[885px] w-[1910px] shrink-0 overflow-hidden rounded-[9px]">
        <div className="flex w-[1891px] flex-col bg-white tracking-[-0.03em] [font-family:Inter,'Liberation_Sans',sans-serif] [font-feature-settings:'cv11'] [word-spacing:-0.04em]">
          <SiteHeader />
          <div className="flex">
            <Sidebar />
            <MainContent />
          </div>
        </div>
        <ScrollBar />
      </div>
      <Taskbar />
    </div>
  );
}
